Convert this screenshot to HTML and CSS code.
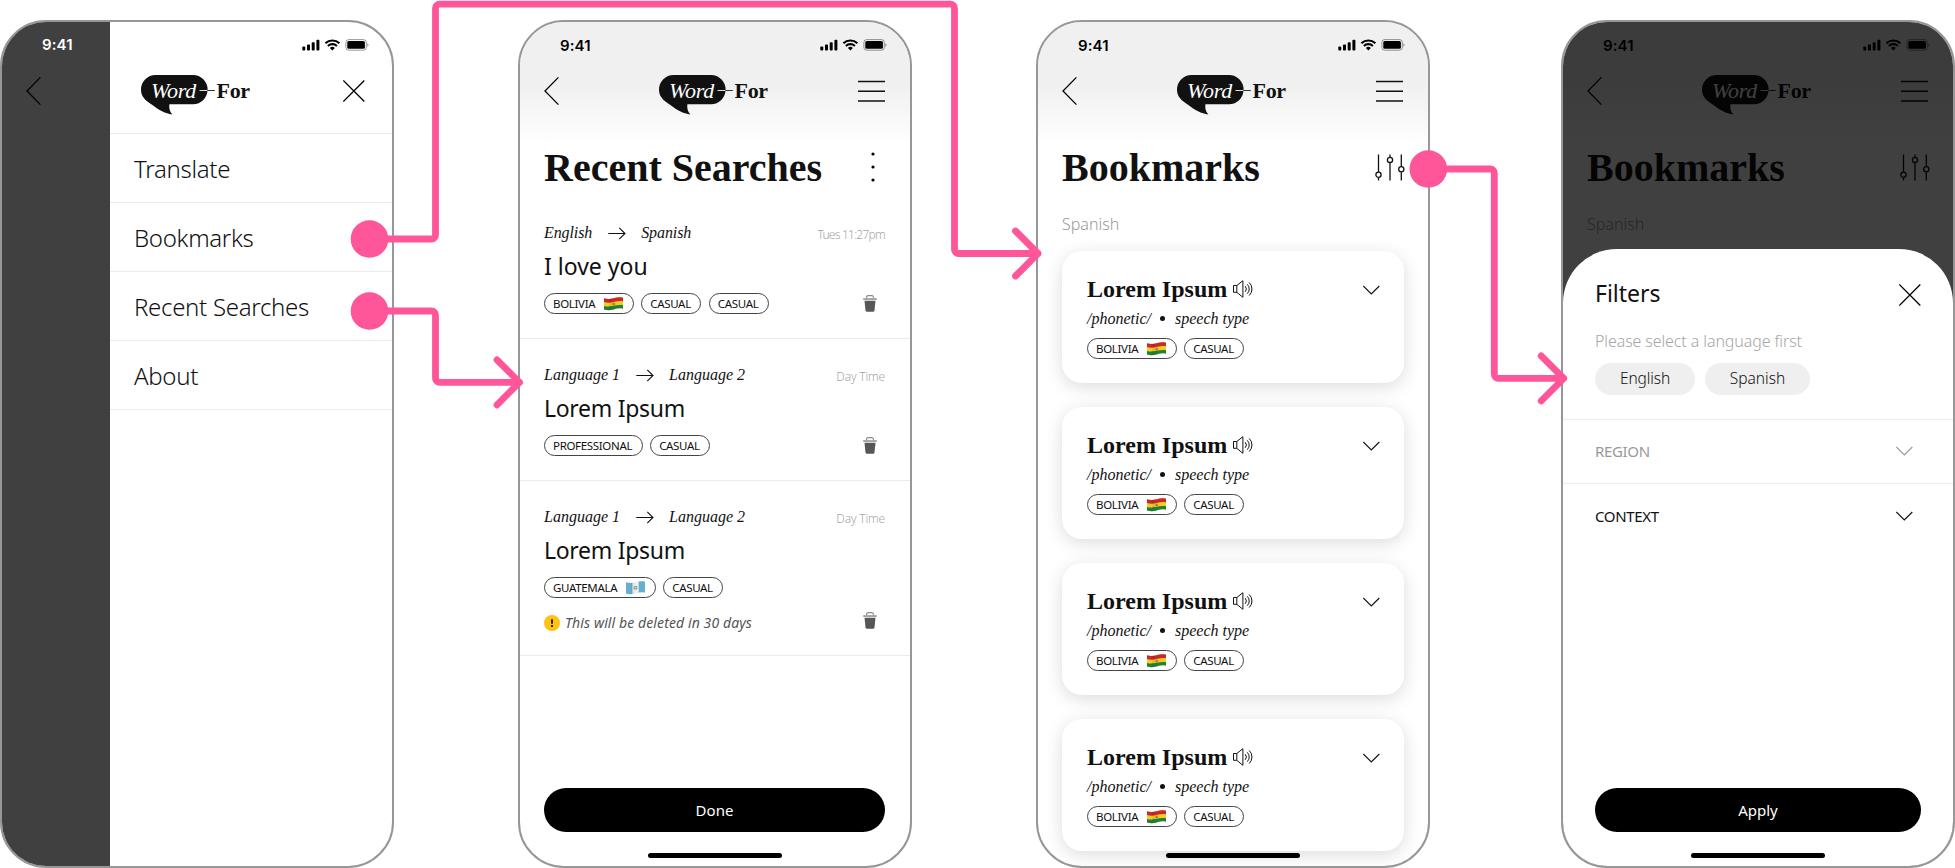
FILE: index.html
```html
<!DOCTYPE html>
<html lang="en">
<head>
<meta charset="utf-8">
<title>Word-For screens</title>
<link rel="stylesheet" href="styles.css">
</head>
<body>
<svg class="defs" aria-hidden="true">
  <defs>
    <symbol id="status" viewBox="0 0 67 12">
      <rect x="0.3" y="7.6" width="3" height="3.9" rx="0.9"/>
      <rect x="5" y="5.6" width="3" height="5.9" rx="0.9"/>
      <rect x="9.7" y="3.2" width="3" height="8.3" rx="0.9"/>
      <rect x="14.4" y="0.8" width="3" height="10.7" rx="0.9"/>
      <g fill="none" stroke="#000" stroke-width="2.1">
        <path d="M23.4 4.3a10.2 10.2 0 0 1 14 0"/>
        <path d="M25.9 6.9a6.6 6.6 0 0 1 9 0"/>
      </g>
      <path d="M30.4 11.4l-2.5-2.5a3.7 3.7 0 0 1 5 0z"/>
      <rect x="43.9" y="0.6" width="20.4" height="10.6" rx="2.8" fill="none" stroke="#000" stroke-opacity="0.4"/>
      <rect x="45.3" y="2" width="17.6" height="7.8" rx="1.6"/>
      <path d="M65.4 4.2v3.6a2 2 0 0 0 0-3.6z" opacity="0.45"/>
    </symbol>
    <symbol id="back" viewBox="0 0 16 30">
      <path d="M14.4 1.4L1 15l13.400 13.600" fill="none" stroke="#000" stroke-width="1.3"/>
    </symbol>
    <symbol id="menu" viewBox="0 0 27 22">
      <path d="M0 1.500h27M0 11.300h27M0 21h27" fill="none" stroke="#111" stroke-width="1.4"/>
    </symbol>
    <symbol id="close" viewBox="0 0 22 22">
      <path d="M0.300 0.500l21 21M21.300 0.500l-21 21" fill="none" stroke="#000" stroke-width="1.3"/>
    </symbol>
    <symbol id="bubble" viewBox="0 0 110 40">
      <path d="M14.600 0H52a14.600 14.600 0 0 1 0 29.200H28.400c-.6 3.600.3 7.400 3 10.300-7-.6-13.800-4.600-20-9.400C4 25.500 0 21.500 0 14.600A14.600 14.600 0 0 1 14.600 0z" fill="#111"/>
      <path d="M58.500 15.500h8" stroke="#ddd"/>
      <path d="M66.500 15.500h7.300" stroke="#333"/>
    </symbol>
    <symbol id="arrow" viewBox="0 0 18 13">
      <path d="M0.300 6.500h16.500M11.300 0.900l5.700 5.600-5.700 5.600" fill="none" stroke="#111" stroke-width="1.1"/>
    </symbol>
    <symbol id="chevron" viewBox="0 0 17 10">
      <path d="M0.300 1l8 8 8-8" fill="none" stroke="currentColor" stroke-width="1.15"/>
    </symbol>
    <symbol id="speaker" viewBox="0 0 20 18">
      <g fill="none" stroke="#111" stroke-width="1">
        <path d="M0.500 5.500h3.300v6.800H0.500zM3.800 5.500L9.900 0.700v16.600L3.800 12.300"/>
        <path d="M12.200 6.200a4.200 4.200 0 0 1 0 5.600M14.200 4.300a6.500 6.500 0 0 1 0 9.400M16.200 2.500a9 9 0 0 1 0 13"/>
      </g>
    </symbol>
    <symbol id="trash" viewBox="0 0 14 17">
      <path d="M3.600 3.400V2.200Q3.600 0.600 5.200 0.600h3.600Q10.400 0.600 10.400 2.200v1.200" fill="none" stroke="#8a8a8a" stroke-width="1.1"/>
      <rect x="0.200" y="3.200" width="13.600" height="1.700" fill="#999"/>
      <path d="M1.500 5.800h11l-1 9.600q-.2 1.300-1.500 1.300H4q-1.300 0-1.500-1.300z" fill="#575757"/>
    </symbol>
    <symbol id="sliders" viewBox="0 0 30 27">
      <g fill="none" stroke="#111" stroke-width="1.3">
        <path d="M3.500 0.500v17.500M3.500 23.500v3M15 0.500v2.600M15 8.700v17.800M26.300 0.500v12.300M26.300 18.300v8.200"/>
        <circle cx="3.500" cy="20.800" r="2.600"/><circle cx="15" cy="5.900" r="2.600"/><circle cx="26.300" cy="15.200" r="2.600"/>
      </g>
    </symbol>
    <clipPath id="flagShape"><path d="M0 1.300C3 2.200 6 2.200 9.500 1.200S16 0 19 0.700V11.800C16 11 13 11.400 9.500 12.400S3 13.400 0 12.500z"/></clipPath>
    <symbol id="bolivia" viewBox="0 0 19 14">
      <g clip-path="url(#flagShape)">
        <rect width="19" height="14" fill="#f3cc1c"/>
        <path d="M0 0H19V4.300C16 3.700 13 4 9.500 5S3 6 0 5z" fill="#cb252f"/>
        <path d="M0 9C3 9.800 6 9.700 9.500 8.800S16 7.600 19 8.200V14H0z" fill="#1c8140"/>
        <circle cx="9.700" cy="6.900" r="1.500" fill="#a98a3d"/>
        <path d="M5 0h3v14H5z" fill="#000" opacity="0.06"/>
      </g>
    </symbol>
    <symbol id="guatemala" viewBox="0 0 19 14">
      <g clip-path="url(#flagShape)">
        <rect width="19" height="14" fill="#e9eef0"/>
        <rect width="6.300" height="14" fill="#66aecf"/>
        <rect x="12.700" width="6.300" height="14" fill="#66aecf"/>
        <circle cx="9.500" cy="6.800" r="2" fill="#8fa67a"/>
        <circle cx="9.500" cy="6.600" r="0.800" fill="#dfe3cf"/>
        <path d="M5 0h3v14H5z" fill="#000" opacity="0.06"/>
      </g>
    </symbol>
  </defs>
</svg>

<main class="board">

  <section class="phone phone-menu">
    <div class="dimmed">
      <span class="time time-light">9:41</span>
      <svg class="icon-back"><use href="#back"/></svg>
    </div>
    <div class="drawer">
      <div class="drawer-head">
        <svg class="icon-status"><use href="#status"/></svg>
        <div class="drawer-bar">
          <div class="logo"><svg class="logo-bubble"><use href="#bubble"/></svg><span class="logo-word">Word</span><span class="logo-for">For</span></div>
          <svg class="icon-close"><use href="#close"/></svg>
        </div>
      </div>
      <nav>
        <a class="menu-item">Translate</a>
        <a class="menu-item">Bookmarks</a>
        <a class="menu-item">Recent Searches</a>
        <a class="menu-item">About</a>
      </nav>
    </div>
  </section>

  <section class="phone phone-recent">
    <header class="top">
      <div class="status-row"><span class="time">9:41</span><svg class="icon-status"><use href="#status"/></svg></div>
      <div class="nav-row">
        <svg class="icon-back"><use href="#back"/></svg>
        <div class="logo"><svg class="logo-bubble"><use href="#bubble"/></svg><span class="logo-word">Word</span><span class="logo-for">For</span></div>
        <svg class="icon-menu"><use href="#menu"/></svg>
      </div>
    </header>
    <div class="title-row">
      <h1>Recent Searches</h1>
      <svg class="icon-dots" viewBox="0 0 4 30"><circle cx="2" cy="2" r="1.600"/><circle cx="2" cy="15" r="1.600"/><circle cx="2" cy="28" r="1.600"/></svg>
    </div>
    <ul class="searches">
      <li>
        <div class="langs langs-short"><em>English</em><svg class="icon-arrow"><use href="#arrow"/></svg><em>Spanish</em><time class="tight">Tues 11:27pm</time></div>
        <h2 class="phrase phrase-love">I love you</h2>
        <div class="tags"><span class="tag">BOLIVIA<svg class="flag"><use href="#bolivia"/></svg></span><span class="tag">CASUAL</span><span class="tag">CASUAL</span><svg class="icon-trash"><use href="#trash"/></svg></div>
      </li>
      <li>
        <div class="langs"><em>Language 1</em><svg class="icon-arrow"><use href="#arrow"/></svg><em>Language 2</em><time>Day Time</time></div>
        <h2 class="phrase">Lorem Ipsum</h2>
        <div class="tags"><span class="tag">PROFESSIONAL</span><span class="tag">CASUAL</span><svg class="icon-trash"><use href="#trash"/></svg></div>
      </li>
      <li>
        <div class="langs"><em>Language 1</em><svg class="icon-arrow"><use href="#arrow"/></svg><em>Language 2</em><time>Day Time</time></div>
        <h2 class="phrase">Lorem Ipsum</h2>
        <div class="tags"><span class="tag">GUATEMALA<svg class="flag"><use href="#guatemala"/></svg></span><span class="tag">CASUAL</span></div>
        <div class="notice"><svg class="icon-warn" viewBox="0 0 16 16"><circle cx="8" cy="8" r="8" fill="#ffc30f"/><path d="M8 4.200v4.600M8 10.100v1.900" stroke="#222" stroke-width="1.900"/></svg><em>This will be deleted in 30 days</em><svg class="icon-trash"><use href="#trash"/></svg></div>
      </li>
    </ul>
    <button class="action">Done</button>
    <i class="home"></i>
  </section>

  <section class="phone phone-bookmarks">
    <header class="top">
      <div class="status-row"><span class="time">9:41</span><svg class="icon-status"><use href="#status"/></svg></div>
      <div class="nav-row">
        <svg class="icon-back"><use href="#back"/></svg>
        <div class="logo"><svg class="logo-bubble"><use href="#bubble"/></svg><span class="logo-word">Word</span><span class="logo-for">For</span></div>
        <svg class="icon-menu"><use href="#menu"/></svg>
      </div>
    </header>
    <div class="title-row"><h1>Bookmarks</h1><svg class="icon-sliders"><use href="#sliders"/></svg></div>
    <p class="group">Spanish</p>
    <div class="cards">
      <article class="card">
        <div class="card-head"><h3>Lorem Ipsum</h3><svg class="icon-speaker"><use href="#speaker"/></svg><svg class="icon-chevron"><use href="#chevron"/></svg></div>
        <p class="phonetic"><span>/phonetic/</span><i class="dot"></i><span>speech type</span></p>
        <div class="tags"><span class="tag">BOLIVIA<svg class="flag"><use href="#bolivia"/></svg></span><span class="tag">CASUAL</span></div>
      </article>
      <article class="card">
        <div class="card-head"><h3>Lorem Ipsum</h3><svg class="icon-speaker"><use href="#speaker"/></svg><svg class="icon-chevron"><use href="#chevron"/></svg></div>
        <p class="phonetic"><span>/phonetic/</span><i class="dot"></i><span>speech type</span></p>
        <div class="tags"><span class="tag">BOLIVIA<svg class="flag"><use href="#bolivia"/></svg></span><span class="tag">CASUAL</span></div>
      </article>
      <article class="card">
        <div class="card-head"><h3>Lorem Ipsum</h3><svg class="icon-speaker"><use href="#speaker"/></svg><svg class="icon-chevron"><use href="#chevron"/></svg></div>
        <p class="phonetic"><span>/phonetic/</span><i class="dot"></i><span>speech type</span></p>
        <div class="tags"><span class="tag">BOLIVIA<svg class="flag"><use href="#bolivia"/></svg></span><span class="tag">CASUAL</span></div>
      </article>
      <article class="card">
        <div class="card-head"><h3>Lorem Ipsum</h3><svg class="icon-speaker"><use href="#speaker"/></svg><svg class="icon-chevron"><use href="#chevron"/></svg></div>
        <p class="phonetic"><span>/phonetic/</span><i class="dot"></i><span>speech type</span></p>
        <div class="tags"><span class="tag">BOLIVIA<svg class="flag"><use href="#bolivia"/></svg></span><span class="tag">CASUAL</span></div>
      </article>
    </div>
    <i class="home"></i>
  </section>

  <section class="phone phone-filters">
    <header class="top">
      <div class="status-row"><span class="time">9:41</span><svg class="icon-status"><use href="#status"/></svg></div>
      <div class="nav-row">
        <svg class="icon-back"><use href="#back"/></svg>
        <div class="logo"><svg class="logo-bubble"><use href="#bubble"/></svg><span class="logo-word">Word</span><span class="logo-for">For</span></div>
        <svg class="icon-menu"><use href="#menu"/></svg>
      </div>
    </header>
    <div class="title-row"><h1>Bookmarks</h1><svg class="icon-sliders"><use href="#sliders"/></svg></div>
    <p class="group">Spanish</p>
    <div class="scrim"></div>
    <div class="sheet">
      <div class="sheet-head"><h2>Filters</h2><svg class="icon-close"><use href="#close"/></svg></div>
      <p class="hint">Please select a language first</p>
      <div class="pills"><span class="pill pill-en">English</span><span class="pill pill-es">Spanish</span></div>
      <div class="option option-off">REGION<svg class="icon-chevron"><use href="#chevron"/></svg></div>
      <div class="option">CONTEXT<svg class="icon-chevron"><use href="#chevron"/></svg></div>
      <button class="action">Apply</button>
    </div>
    <i class="home"></i>
  </section>

  <svg class="flows" viewBox="0 0 1955 868">
    <g fill="none" stroke="#ff5599" stroke-width="6.800" stroke-linecap="round" stroke-linejoin="round">
      <path d="M369 239H431.500a4 4 0 0 0 4-4V8.200a4 4 0 0 1 4-4H950.500a4 4 0 0 1 4 4V249.500a4 4 0 0 0 4 4H1038M1015.500 231L1038 253.500L1015.500 276"/>
      <path d="M369 311H431.500a4 4 0 0 1 4 4V378.300a4 4 0 0 0 4 4H519.500M497 359.800L519.500 382.300L497 404.800"/>
      <path d="M1428 169H1490.300a4 4 0 0 1 4 4V374.300a4 4 0 0 0 4 4H1563.700M1541.200 355.800L1563.700 378.300L1541.200 400.800"/>
    </g>
    <g fill="#ff5599"><circle cx="369.500" cy="239" r="18.800"/><circle cx="369.500" cy="311" r="18.800"/><circle cx="1428.300" cy="169" r="18.800"/></g>
  </svg>
</main>
</body>
</html>
```
FILE: styles.css
```css
* { box-sizing: border-box; margin: 0; padding: 0; }

body {
  width: 1955px;
  height: 868px;
  overflow: hidden;
  background: #fff;
  color: #111;
  font-family: "Noto Sans", "Open Sans", sans-serif;
}

svg { display: block; flex: none; }
.defs { position: absolute; width: 0; height: 0; }
h1, h3, .langs em, .phonetic, .logo { font-family: "Liberation Serif", "Times New Roman", serif; }

.board { position: relative; display: flex; padding-top: 20px; height: 868px; }

.phone {
  position: relative;
  display: flex;
  flex-direction: column;
  flex: none;
  width: 394px;
  height: 848px;
  border: 2px solid #979797;
  border-radius: 46px;
  background: #fff;
  overflow: hidden;
}
.phone-menu { flex-direction: row; }
.phone-recent, .phone-bookmarks { margin-left: 124px; }
.phone-filters { margin-left: 131px; }

/* Status bar and navigation */
.time { font: 600 15px/16px Inter, sans-serif; letter-spacing: 0.1px; color: #000; }
.icon-status { width: 67px; height: 12px; }
.icon-back { width: 16px; height: 30px; }
.icon-menu { width: 27px; height: 22px; }
.icon-close { width: 22px; height: 22px; }

.top { height: 124px; flex: none; background: linear-gradient(#f0f0f0 50%, #fff); }
.status-row { display: flex; align-items: center; justify-content: space-between; height: 46px; padding: 0 23px 0 40px; }
.status-row .time { padding-top: 1px; }
.nav-row { display: flex; align-items: center; height: 46px; padding: 0 25px 0 24px; }
.nav-row .icon-menu { margin-left: auto; }

.logo { position: relative; width: 110px; height: 40px; }
.logo span { position: absolute; top: 4px; line-height: 24px; font-size: 22px; }
.logo-bubble { width: 110px; height: 40px; }
.logo-word { left: 10px; color: #fff; font-style: italic; letter-spacing: -0.3px; }
.logo-for { left: 75.500px; font-weight: 700; letter-spacing: -0.3px; }
.nav-row .logo { margin: 8px 0 0 99px; }

.title-row { display: flex; align-items: center; justify-content: space-between; flex: none; height: 44px; padding: 0 25px 0 24px; }
.title-row svg { margin-top: -2px; }
h1 { font-size: 40px; line-height: 44px; }
.icon-dots { width: 4px; height: 30px; margin-right: 10.500px; }
.icon-sliders { width: 30px; height: 27px; margin-right: -2px; }

.home { position: absolute; left: 128px; bottom: 8px; width: 134px; height: 5px; border-radius: 3px; background: #000; }

.action {
  flex: none;
  height: 44px;
  margin-top: auto;
  border: 0;
  border-radius: 22px;
  background: #000;
  color: #fff;
  font: 400 15px/44px "Noto Sans", sans-serif;
}
.phone-recent .action { margin: auto 25px 34px 24px; }

/* Side menu */
.dimmed { width: 108px; background: #404040; padding: 15px 0 0 24px; }
.dimmed .icon-back { margin-top: 23px; }
.time-light { display: block; padding-left: 16px; color: #fff; }
.drawer { flex: 1; }
.drawer-head { height: 112px; padding-top: 17px; border-bottom: 1px solid #ebebeb; }
.drawer-head .icon-status { margin: 0 23px 0 auto; }
.drawer-bar { display: flex; justify-content: space-between; padding: 24px 27px 0 31px; }
.drawer-bar .icon-close { margin-top: 5px; }
.menu-item { display: block; height: 69px; padding-left: 24px; border-bottom: 1px solid #ebebeb; font-weight: 300; font-size: 24px; line-height: 69px; letter-spacing: -0.3px; }

/* Recent searches */
.searches { list-style: none; margin-top: 7px; }
.searches li { padding: 26px 25px 24px 24px; border-bottom: 1px solid #ebebeb; }
.langs { display: flex; align-items: center; height: 20px; }
.langs em { font-size: 16px; line-height: 20px; }
.langs-short em { letter-spacing: -0.1px; }
.icon-arrow { width: 18px; height: 13px; margin: 0 15px 0 16px; }
.langs time { margin: 2px 0 0 auto; color: #a6a6a6; font-size: 12px; font-weight: 300; letter-spacing: -0.2px; }
.langs .tight { letter-spacing: -0.75px; }
.phrase { margin-top: 7px; font-size: 23px; font-weight: 400; line-height: 32px; letter-spacing: -0.3px; }
.phrase-love { letter-spacing: 0; }
.phrase + .tags { margin-top: 11px; }
.tags { display: flex; align-items: center; gap: 7.500px; height: 21px; }
.tag { display: flex; align-items: center; gap: 9px; height: 21px; padding: 0 9.500px 0 8px; border: 1px solid #444; border-radius: 11px; font-size: 11.500px; line-height: 19px; letter-spacing: -0.33px; }
.flag { width: 19px; height: 14px; }
.icon-trash { width: 14px; height: 17px; margin: 0 8px 0 auto; }
.notice { display: flex; align-items: center; height: 16px; margin-top: 17px; }
.icon-warn { width: 16px; height: 16px; }
.notice em { margin-left: 5px; color: #555; font-size: 14px; line-height: 16px; letter-spacing: 0.1px; }
.notice .icon-trash { margin-bottom: 5px; }

/* Bookmarks */
.group { flex: none; margin: 24px 0 17px 24px; color: #999; font-weight: 300; font-size: 16px; line-height: 20px; }
.cards { display: flex; flex-direction: column; gap: 24px; padding: 0 24px; }
.card { flex: none; height: 132px; padding: 24px 24px 24px 25px; border-radius: 20px; background: #fff; box-shadow: 0 4px 18px rgba(0, 0, 0, 0.14); }
.card-head { display: flex; align-items: center; height: 28px; }
h3 { font-size: 24px; line-height: 28px; }
.icon-speaker { width: 20px; height: 18px; margin-left: 6px; }
.icon-chevron { width: 17px; height: 10px; margin-left: auto; }
.card .icon-chevron { margin-top: 2px; }
.phonetic { display: flex; align-items: center; margin-top: 6px; font-size: 16px; font-style: italic; line-height: 20px; }
.dot { width: 5px; height: 5px; margin: 0 10px 2px 9px; border-radius: 50%; background: #111; }
.card .tags { margin-top: 9px; }

/* Filter sheet */
.scrim { position: absolute; inset: 0; background: rgba(0, 0, 0, 0.75); }
.sheet { position: absolute; inset: 227px 0 0; display: flex; flex-direction: column; padding: 28px 0 34px; border-radius: 54px 54px 0 0; background: #fff; }
.sheet-head { display: flex; align-items: center; justify-content: space-between; padding: 0 32px; }
.sheet-head h2 { font-size: 23px; font-weight: 400; line-height: 32px; }
.sheet-head .icon-close { margin-top: 3px; }
.hint { margin: 22px 32px 0; color: #a6a6a6; font-weight: 300; font-size: 16px; line-height: 20px; letter-spacing: -0.1px; }
.pills { display: flex; gap: 10px; padding: 12px 32px 24px; border-bottom: 1px solid #ebebeb; }
.pill { height: 32px; border-radius: 16px; background: #efefef; font-weight: 300; font-size: 15.500px; line-height: 31px; text-align: center; }
.pill-en { width: 100px; letter-spacing: -0.1px; }
.pill-es { width: 105px; }
.option { display: flex; align-items: center; height: 64px; padding: 0 40px 0 32px; font-size: 15px; line-height: 61px; letter-spacing: -0.35px; }
.option-off { border-bottom: 1px solid #ebebeb; color: #999; }
.option .icon-chevron { margin-top: -1px; }
.sheet .action { margin: auto 32px 0; }

/* Flow connectors drawn over the screens */
.flows { position: absolute; left: 0; top: 0; width: 1955px; height: 868px; }
```
